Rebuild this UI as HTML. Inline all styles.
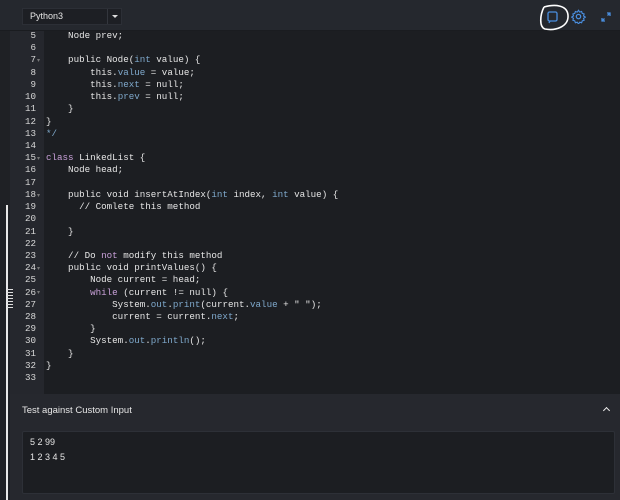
<!DOCTYPE html>
<html><head><meta charset="utf-8"><style>
*{margin:0;padding:0;box-sizing:border-box}
body{width:620px;height:500px;overflow:hidden;background:#1f2125;font-family:"Liberation Sans",sans-serif;position:relative}
.top{position:absolute;left:0;top:0;width:620px;height:31px;background:#25282e;border-bottom:1px solid #1a1c20}
.sel{position:absolute;left:22px;top:8px;width:100px;height:17px;background:#1d1f24;border:1px solid #2c2f36;color:#e6e6e6;font-size:9px;line-height:15px;padding-left:7px}
.sel .dv{position:absolute;left:84px;top:0;width:1px;height:15px;background:#33363d}
.sel .ar{position:absolute;left:89px;top:6px;border-left:3px solid transparent;border-right:3px solid transparent;border-top:3px solid #ddd}
.gut{position:absolute;left:10px;top:31px;width:34px;height:363px;background:#25272d}
.code{position:absolute;left:44px;top:31px;width:576px;height:363px;background:#1c1e22}
.ln{position:absolute;left:10px;top:30px;width:26px;text-align:right;font:9.2px/12.22px "Liberation Mono",monospace;color:#d8d8d8}
.cd{position:absolute;left:46px;top:30px;font:9.2px/12.22px "Liberation Mono",monospace;color:#e6e6e6;white-space:pre}
.k{color:#c8a0d8}.t{color:#7fa9cc}
.fold{position:absolute;left:37px;font-size:6px;line-height:6px;color:#777}
.sb{position:absolute;left:6px;top:205px;width:2px;height:295px;background:#e8e8e8}
.grip{position:absolute;left:7px;top:289px;width:6px;height:20px;background:repeating-linear-gradient(#ddd 0 1px,transparent 1px 3px)}
.panel{position:absolute;left:10px;top:394px;width:610px;height:106px;background:#26282e}
.ttl{position:absolute;left:22px;top:405px;font-size:9.5px;color:#e6e6e6}
.car{position:absolute;left:604px;top:408px;width:5px;height:5px;border-left:1.5px solid #eee;border-top:1.5px solid #eee;transform:rotate(45deg)}
.inp{position:absolute;left:22px;top:431px;width:593px;height:63px;background:#1c1e22;border:1px solid #2d3037;border-radius:2px;color:#e6e6e6;font-size:9px;line-height:14.5px;padding:3px 0 0 7px}
</style></head><body>
<div class="top">
<div class="sel">Python3<div class="dv"></div><div class="ar"></div></div>
<svg style="position:absolute;left:537px;top:3px" width="34" height="29" viewBox="0 0 34 29"><path d="M7 4 C18 1 30 2 31 12 C32 24 18 28 8 26 C2 24 3 12 7 4" fill="none" stroke="#fff" stroke-width="1.6"/><rect x="11" y="9" width="9" height="9" rx="1.5" fill="none" stroke="#4a8fe0" stroke-width="1.3"/><path d="M13 18 l-1 2" stroke="#4a8fe0" stroke-width="1.3"/></svg>
<svg style="position:absolute;left:571px;top:9px" width="15" height="15" viewBox="0 0 24 24"><circle cx="12" cy="12" r="3.5" fill="none" stroke="#4a8fe0" stroke-width="2"/><path d="M12 2l2 3 3-1 1 3 3 1-1 3 3 2-3 2 1 3-3 1-1 3-3-1-2 3-2-3-3 1-1-3-3-1 1-3-3-2 3-2-1-3 3-1 1-3 3 1z" fill="none" stroke="#4a8fe0" stroke-width="1.8"/></svg>
<svg style="position:absolute;left:601px;top:12px" width="10" height="10" viewBox="0 0 10 10"><path d="M6 1h3v3M9 1L6.5 3.5M4 9H1V6M1 9l2.5-2.5" fill="none" stroke="#4a8fe0" stroke-width="1.3"/></svg>
</div>
<div class="gut"></div><div class="code"></div>
<div class="ln">5<br>6<br>7<br>8<br>9<br>10<br>11<br>12<br>13<br>14<br>15<br>16<br>17<br>18<br>19<br>20<br>21<br>22<br>23<br>24<br>25<br>26<br>27<br>28<br>29<br>30<br>31<br>32<br>33</div>
<span class="fold" style="top:58px">▾</span><span class="fold" style="top:156px">▾</span><span class="fold" style="top:193px">▾</span><span class="fold" style="top:266px">▾</span><span class="fold" style="top:290px">▾</span>
<div class="cd">    Node prev;

    public Node(<span class="t">int</span> value) {
        this.<span class="t">value</span> = value;
        this.<span class="t">next</span> = null;
        this.<span class="t">prev</span> = null;
    }
}
<span class="t">*/</span>

<span class="k">class</span> LinkedList {
    Node head;

    public void insertAtIndex(<span class="t">int</span> index, <span class="t">int</span> value) {
      // Comlete this method

    }

    // Do <span class="k">not</span> modify this method
    public void printValues() {
        Node current = head;
        <span class="k">while</span> (current != null) {
            System.<span class="t">out</span>.<span class="t">print</span>(current.<span class="t">value</span> + " ");
            current = current.<span class="t">next</span>;
        }
        System.<span class="t">out</span>.<span class="t">println</span>();
    }
}
</div>
<div class="panel"></div>
<div class="sb"></div><div class="grip"></div>
<div class="ttl">Test against Custom Input</div>
<div class="car"></div>
<div class="inp">5 2 99<br>1 2 3 4 5</div>
</body></html>
